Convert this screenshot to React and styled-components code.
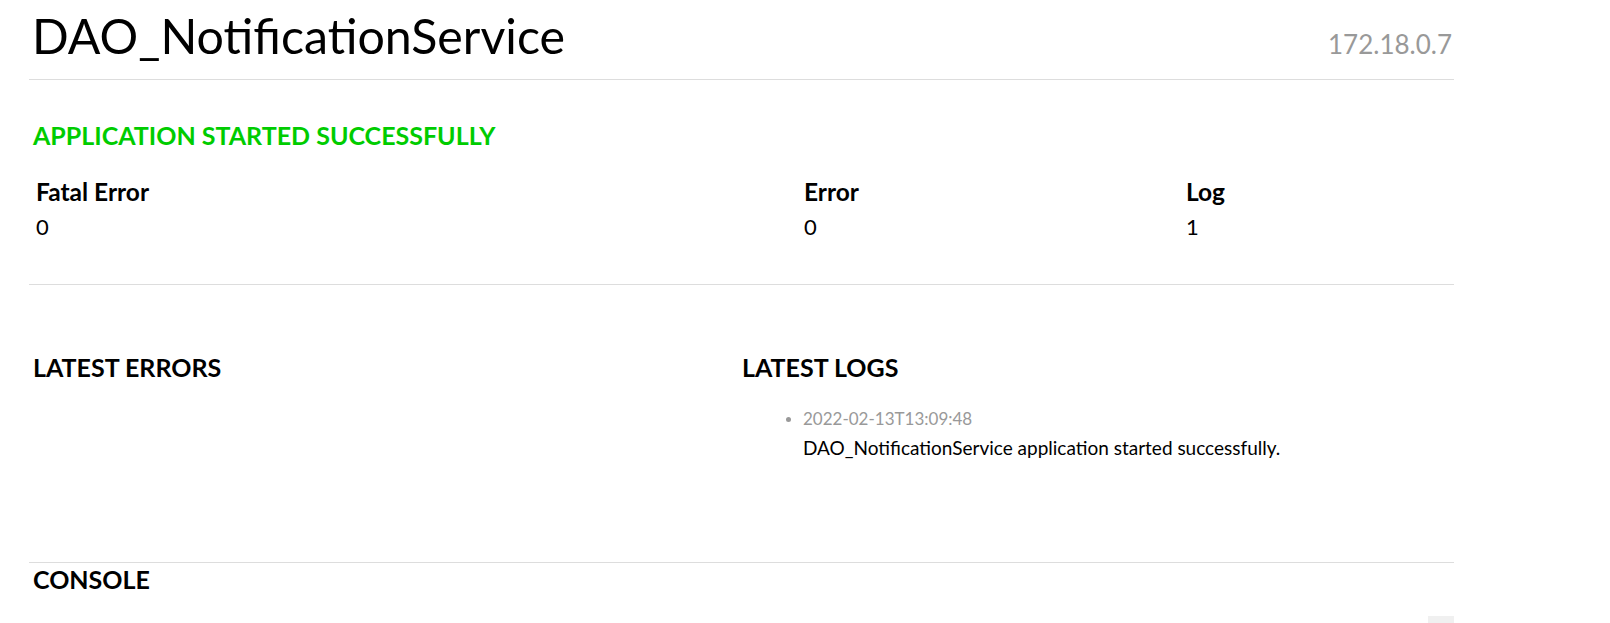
import React from "react";
import styled, { createGlobalStyle } from "styled-components";

const Global = createGlobalStyle`
  html, body { margin: 0; padding: 0; background: #fff; }
  body { font-family: "Lato", "Open Sans", sans-serif; color: #000; }
`;

const Page = styled.div`
  width: 1425px;
  margin-left: 29px;
`;

const Header = styled.header`
  display: flex;
  justify-content: space-between;
  align-items: baseline;
  height: 80px;
  box-sizing: border-box;
  border-bottom: 1px solid #dddddd;
  padding: 7px 2px 0 3px;
`;

const Title = styled.h1`
  margin: 0;
  font-size: 48.3px;
  font-weight: 400;
  line-height: 56px;
`;

const Host = styled.span`
  font-size: 26px;
  color: #999;
`;

const Status = styled.h2`
  margin: 40px 0 0 4px;
  font-size: 25px;
  font-weight: 700;
  color: #00cc00;
  line-height: 30px;
`;

const Stats = styled.div`
  display: grid;
  grid-template-columns: 768px 382px 1fr;
  margin-top: 27px;
  padding: 0 0 42px 3px;
  border-bottom: 1px solid #dddddd;
`;

const Stat = styled.div`
  padding: 0 4px;
`;

const StatLabel = styled.div`
  font-size: 24.5px;
  font-weight: 700;
  line-height: 30px;
`;

const StatValue = styled.div`
  margin-top: 5px;
  font-size: 22px;
  line-height: 30px;
`;

const Panels = styled.div`
  display: grid;
  grid-template-columns: 709px 1fr;
  padding-top: 67px;
  height: 278px;
  box-sizing: border-box;
  border-bottom: 1px solid #dddddd;
`;

const Panel = styled.section`
  padding: 0 4px;
`;

const SectionTitle = styled.h3`
  margin: ${(p) => p.$m || "0"};
  font-size: 25px;
  font-weight: 700;
  line-height: 30px;
`;

const LogList = styled.ul`
  margin: 25px 0 0;
  padding-left: 61px;
  list-style: disc;
  li::marker { color: #999; font-size: 15px; }
`;

const LogItem = styled.li``;

const LogTime = styled.div`
  font-size: 17px;
  color: #999;
  line-height: 24px;
`;

const LogMsg = styled.div`
  margin-top: 4px;
  font-size: 19px;
  line-height: 26px;
`;

const ConsoleBar = styled.div`
  display: flex;
  justify-content: flex-end;
  margin-top: 22px;
`;

const ConsoleTab = styled.div`
  width: 26px;
  height: 10px;
  background: #f0f0f0;
`;

export default function App() {
  return (
    <>
      <Global />
      <Page>
        <Header>
          <Title>DAO_NotificationService</Title>
          <Host>172.18.0.7</Host>
        </Header>
        <Status>APPLICATION STARTED SUCCESSFULLY</Status>
        <Stats>
          <Stat>
            <StatLabel>Fatal Error</StatLabel>
            <StatValue>0</StatValue>
          </Stat>
          <Stat>
            <StatLabel>Error</StatLabel>
            <StatValue>0</StatValue>
          </Stat>
          <Stat>
            <StatLabel>Log</StatLabel>
            <StatValue>1</StatValue>
          </Stat>
        </Stats>
        <Panels>
          <Panel>
            <SectionTitle>LATEST ERRORS</SectionTitle>
          </Panel>
          <Panel>
            <SectionTitle>LATEST LOGS</SectionTitle>
            <LogList>
              <LogItem>
                <LogTime>2022-02-13T13:09:48</LogTime>
                <LogMsg>DAO_NotificationService application started successfully.</LogMsg>
              </LogItem>
            </LogList>
          </Panel>
        </Panels>
        <SectionTitle $m="1px 0 0 4px">CONSOLE</SectionTitle>
        <ConsoleBar>
          <ConsoleTab />
        </ConsoleBar>
      </Page>
    </>
  );
}
